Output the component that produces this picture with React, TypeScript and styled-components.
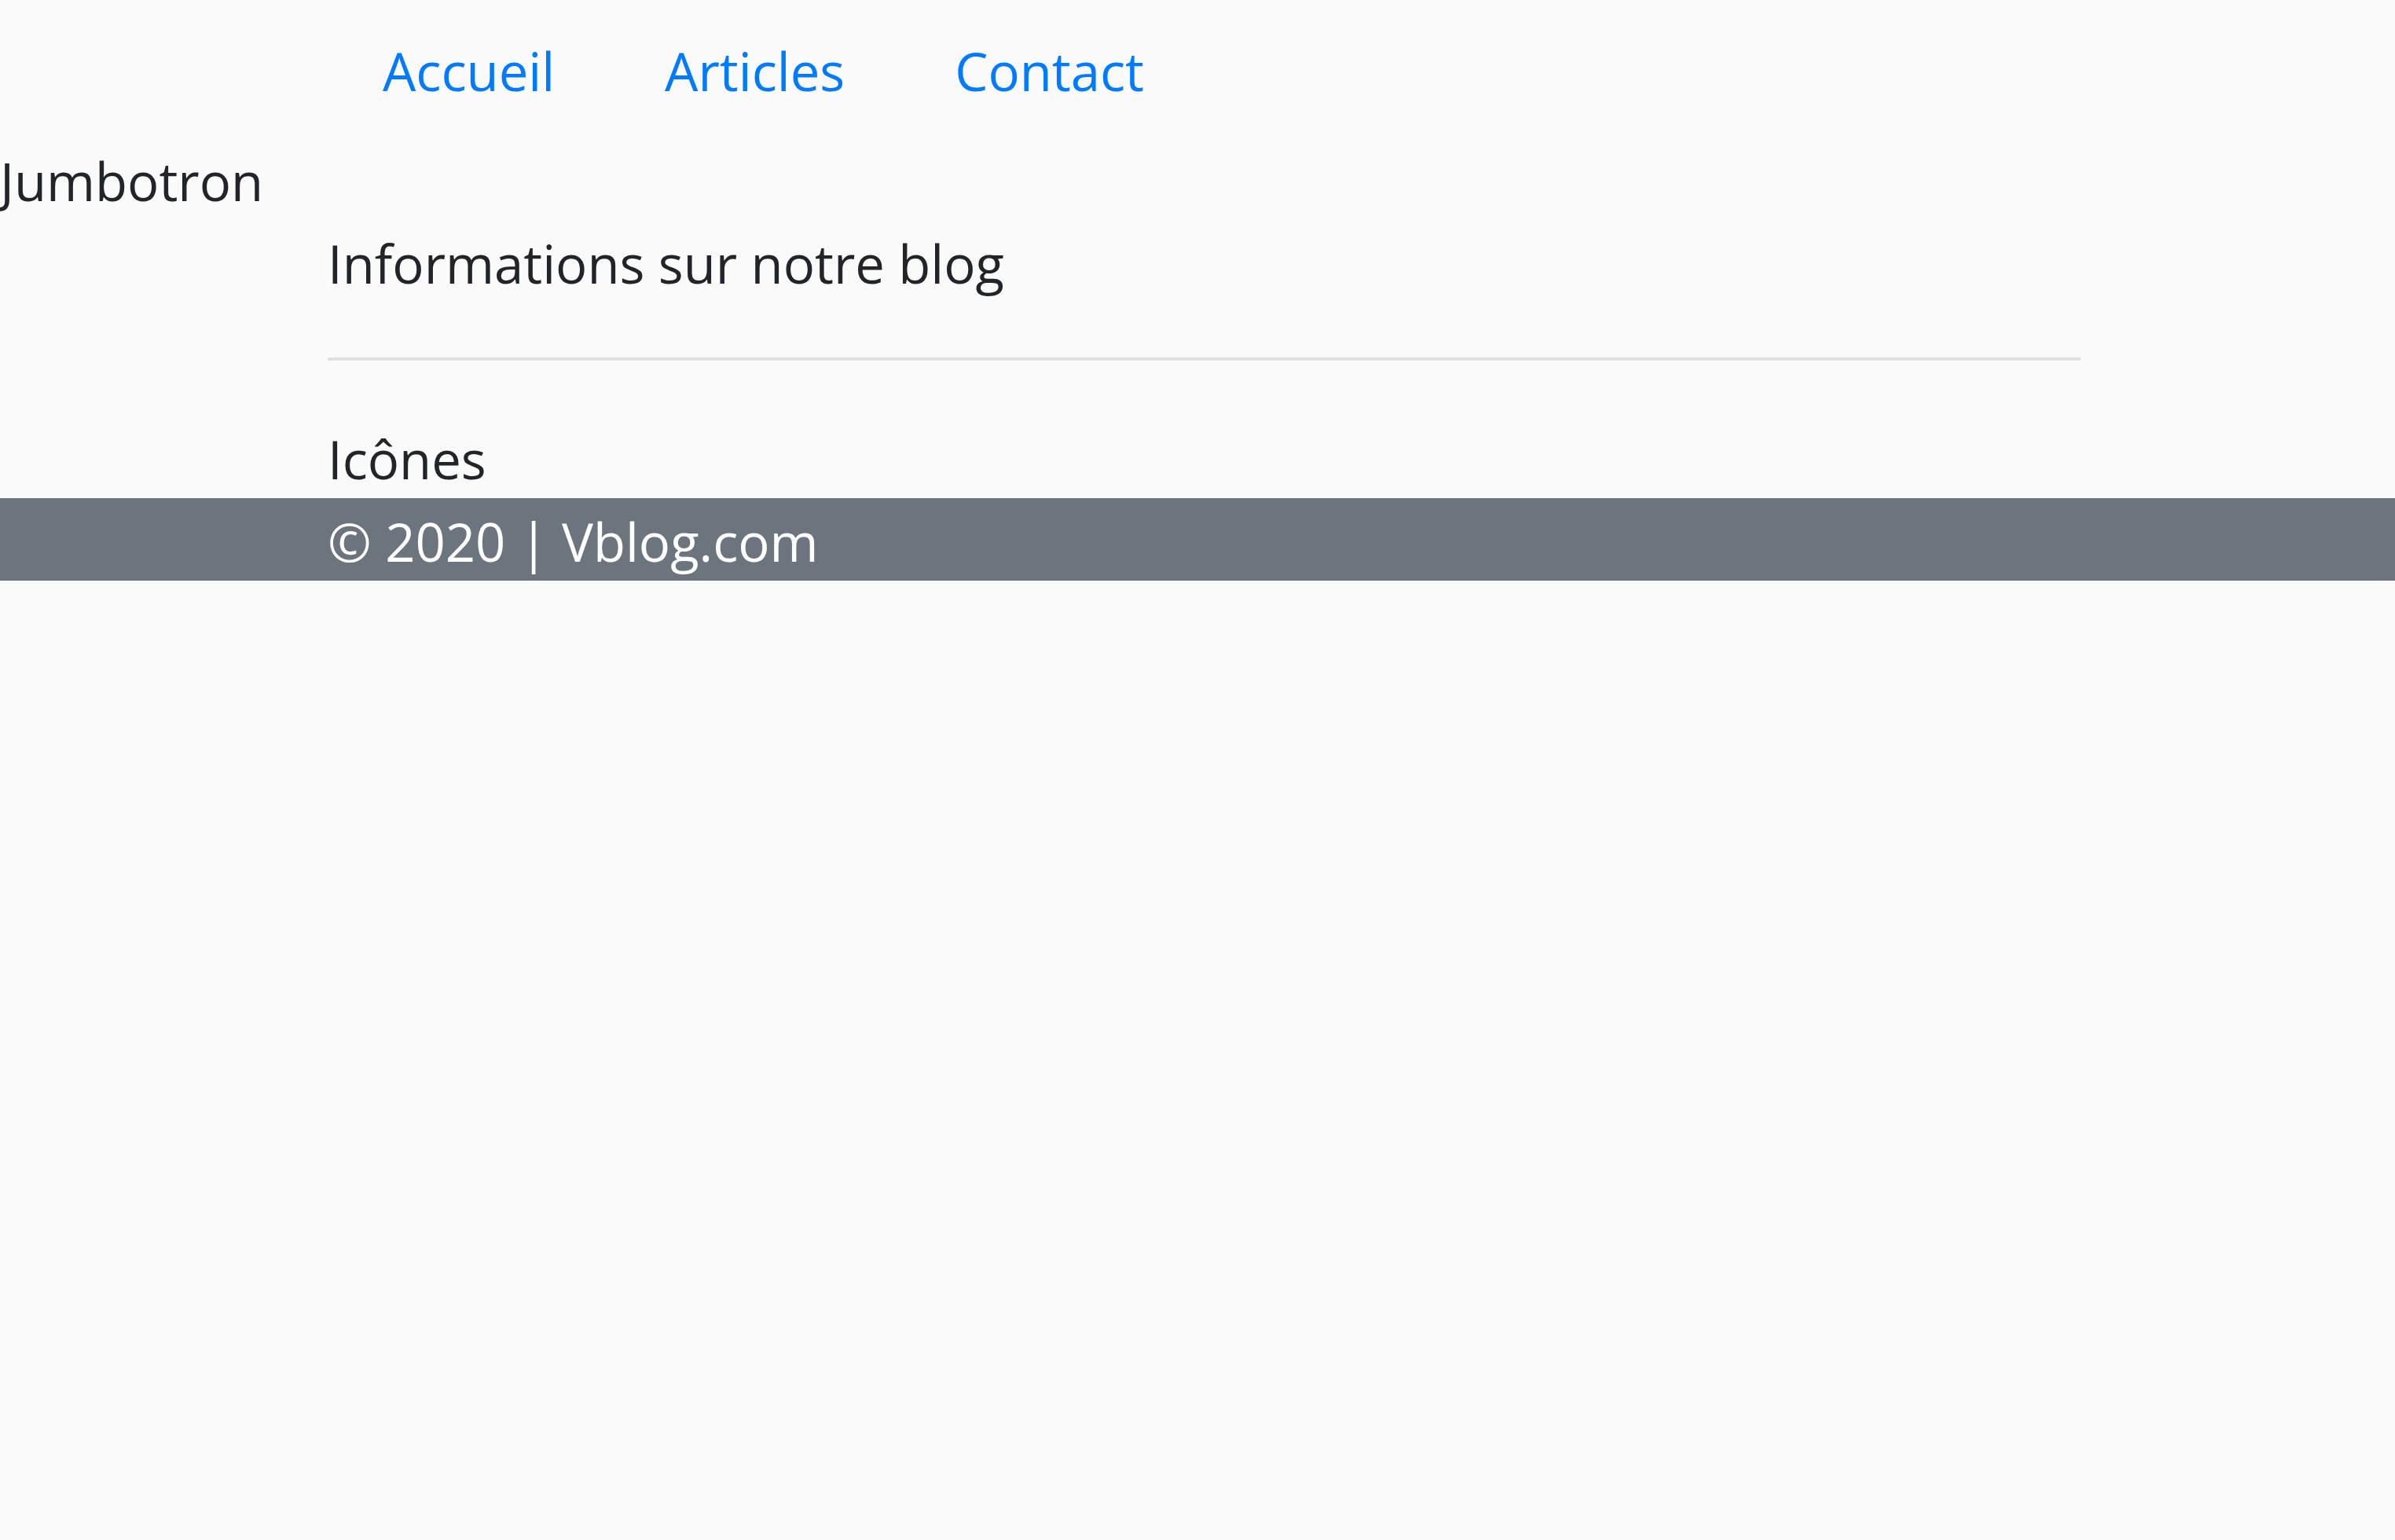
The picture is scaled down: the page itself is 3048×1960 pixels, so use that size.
import React from "react";
import styled, { createGlobalStyle } from "styled-components";

const GlobalStyle = createGlobalStyle`
  *, *::before, *::after {
    box-sizing: border-box;
  }
  body {
    margin: 0;
    background: #fafafa;
    color: #212529;
    font-family: "Open Sans", "Noto Sans", sans-serif;
    font-size: 67px;
    line-height: 100px;
  }
`;

const Container = styled.div`
  width: 100%;
  max-width: 2370px;
  margin: 0 auto;
  padding: 0 61px 0 78px;
`;

const Line = styled.div`
  padding-top: 5px;
`;

const Nav = styled.ul`
  display: flex;
  flex-wrap: wrap;
  margin: 0;
  padding: 0;
  list-style: none;
`;

const NavLink = styled.a`
  display: block;
  padding: 40px 70px 35px;
  color: #007bff;
  text-decoration: none;

  &:hover {
    color: #0056b3;
  }
`;

const Divider = styled.hr`
  margin: 70px 0;
  border: 0;
  border-top: 4px solid #e0e0e0;
`;

const Footer = styled.footer`
  background: #6c757d;
  color: #ffffff;
`;

const links = ["Accueil", "Articles", "Contact"];

export default function App() {
  return (
    <>
      <GlobalStyle />
      <header>
        <Container as="nav">
          <Nav>
            {links.map((label) => (
              <li key={label}>
                <NavLink href="#">{label}</NavLink>
              </li>
            ))}
          </Nav>
        </Container>
        <Line>Jumbotron</Line>
      </header>
      <Container as="main">
        <Line as="section">Informations sur notre blog</Line>
        <Divider />
        <Line as="section">Icônes</Line>
      </Container>
      <Footer>
        <Container>
          <Line>© 2020 | Vblog.com</Line>
        </Container>
      </Footer>
    </>
  );
}
